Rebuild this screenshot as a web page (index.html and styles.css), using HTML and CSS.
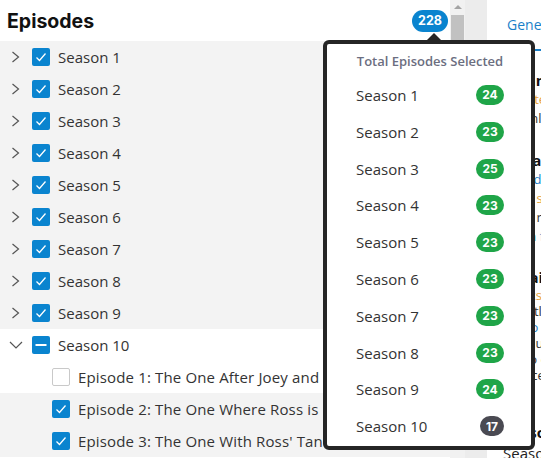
FILE: index.html
```html
<!DOCTYPE html>
<html lang="en">
<head>
<meta charset="utf-8">
<title>Episodes</title>
<link rel="stylesheet" href="styles.css">
</head>
<body>
<div class="app">
  <section class="episodes">
    <header class="ep-header">
      <h1 class="ep-title">Episodes</h1>
      <span class="count">228</span>
    </header>
    <ul class="tree">
      <li class="row"><svg class="chev" viewBox="0 0 16 16"><path d="M4.5 3 L10.5 8 L4.5 13"/></svg><span class="cb cb-on"><svg viewBox="0 0 18 18"><path d="M4.5 9.5 L7.5 12.5 L13.5 5.5"/></svg></span><span class="label">Season 1</span></li>
      <li class="row"><svg class="chev" viewBox="0 0 16 16"><path d="M4.5 3 L10.5 8 L4.5 13"/></svg><span class="cb cb-on"><svg viewBox="0 0 18 18"><path d="M4.5 9.5 L7.5 12.5 L13.5 5.5"/></svg></span><span class="label">Season 2</span></li>
      <li class="row"><svg class="chev" viewBox="0 0 16 16"><path d="M4.5 3 L10.5 8 L4.5 13"/></svg><span class="cb cb-on"><svg viewBox="0 0 18 18"><path d="M4.5 9.5 L7.5 12.5 L13.5 5.5"/></svg></span><span class="label">Season 3</span></li>
      <li class="row"><svg class="chev" viewBox="0 0 16 16"><path d="M4.5 3 L10.5 8 L4.5 13"/></svg><span class="cb cb-on"><svg viewBox="0 0 18 18"><path d="M4.5 9.5 L7.5 12.5 L13.5 5.5"/></svg></span><span class="label">Season 4</span></li>
      <li class="row"><svg class="chev" viewBox="0 0 16 16"><path d="M4.5 3 L10.5 8 L4.5 13"/></svg><span class="cb cb-on"><svg viewBox="0 0 18 18"><path d="M4.5 9.5 L7.5 12.5 L13.5 5.5"/></svg></span><span class="label">Season 5</span></li>
      <li class="row"><svg class="chev" viewBox="0 0 16 16"><path d="M4.5 3 L10.5 8 L4.5 13"/></svg><span class="cb cb-on"><svg viewBox="0 0 18 18"><path d="M4.5 9.5 L7.5 12.5 L13.5 5.5"/></svg></span><span class="label">Season 6</span></li>
      <li class="row"><svg class="chev" viewBox="0 0 16 16"><path d="M4.5 3 L10.5 8 L4.5 13"/></svg><span class="cb cb-on"><svg viewBox="0 0 18 18"><path d="M4.5 9.5 L7.5 12.5 L13.5 5.5"/></svg></span><span class="label">Season 7</span></li>
      <li class="row"><svg class="chev" viewBox="0 0 16 16"><path d="M4.5 3 L10.5 8 L4.5 13"/></svg><span class="cb cb-on"><svg viewBox="0 0 18 18"><path d="M4.5 9.5 L7.5 12.5 L13.5 5.5"/></svg></span><span class="label">Season 8</span></li>
      <li class="row"><svg class="chev" viewBox="0 0 16 16"><path d="M4.5 3 L10.5 8 L4.5 13"/></svg><span class="cb cb-on"><svg viewBox="0 0 18 18"><path d="M4.5 9.5 L7.5 12.5 L13.5 5.5"/></svg></span><span class="label">Season 9</span></li>
      <li class="row row-white"><svg class="chev" viewBox="0 0 16 16"><path d="M2 5 L8 11 L14 5"/></svg><span class="cb cb-on"><svg viewBox="0 0 18 18"><path class="dash" d="M3.5 9 L14.5 9"/></svg></span><span class="label">Season 10</span></li>
      <li class="row row-white row-ep"><span class="cb cb-off"></span><span class="label">Episode 1: The One After Joey and Rachel Kiss</span></li>
      <li class="row row-ep"><span class="cb cb-on"><svg viewBox="0 0 18 18"><path d="M4.5 9.5 L7.5 12.5 L13.5 5.5"/></svg></span><span class="label">Episode 2: The One Where Ross is Fine</span></li>
      <li class="row row-ep"><span class="cb cb-on"><svg viewBox="0 0 18 18"><path d="M4.5 9.5 L7.5 12.5 L13.5 5.5"/></svg></span><span class="label">Episode 3: The One With Ross' Tan</span></li>
    </ul>
  </section>
  <div class="scrollbar"><span class="sb-arrow"></span><span class="sb-thumb"></span></div>
  <div class="gutter"></div>
  <section class="details">
    <nav class="tabs"><span class="tab">General</span></nav>
    <div class="d-block b1">
      <div class="d-title">Summary</div>
      <div class="d-line orange">Selected episodes</div>
      <div class="d-line dark">Downloaded in background</div>
    </div>
    <div class="d-block b2">
      <div class="d-title">Library</div>
      <div class="d-line blue">Friends (1994)</div>
      <div class="d-line orange">Total size</div>
      <div class="d-line dark">Total runtime</div>
      <div class="d-line blue">Open folder</div>
    </div>
    <div class="d-block b3">
      <div class="d-title">Details</div>
      <div class="d-line orange">Tracks</div>
      <div class="d-line dark">Subtitles</div>
      <div class="d-line blue">Audio language</div>
      <div class="d-line dark">Resolution</div>
      <div class="d-line dark">Video codec</div>
      <div class="d-line dark">Source</div>
    </div>
    <div class="d-block b4">
      <div class="d-title">Seasons</div>
      <div class="d-text">Season 10</div>
    </div>
  </section>

  <div class="popover">
    <div class="pop-title">Total Episodes Selected</div>
    <ul class="pop-list">
      <li class="pop-row"><span>Season 1</span><span class="pill green">24</span></li>
      <li class="pop-row"><span>Season 2</span><span class="pill green">23</span></li>
      <li class="pop-row"><span>Season 3</span><span class="pill green">25</span></li>
      <li class="pop-row"><span>Season 4</span><span class="pill green">23</span></li>
      <li class="pop-row"><span>Season 5</span><span class="pill green">23</span></li>
      <li class="pop-row"><span>Season 6</span><span class="pill green">23</span></li>
      <li class="pop-row"><span>Season 7</span><span class="pill green">23</span></li>
      <li class="pop-row"><span>Season 8</span><span class="pill green">23</span></li>
      <li class="pop-row"><span>Season 9</span><span class="pill green">24</span></li>
      <li class="pop-row"><span>Season 10</span><span class="pill gray">17</span></li>
    </ul>
  </div>
</div>
</body>
</html>
```

FILE: styles.css
```css
* { box-sizing: border-box; }
html, body { margin: 0; padding: 0; }
body {
  width: 541px;
  height: 458px;
  overflow: hidden;
  background: #fff;
  font-family: "Open Sans", "Noto Sans", sans-serif;
  color: #333;
}
.app {
  position: relative;
  display: flex;
  height: 458px;
}
.episodes {
  width: 450px;
  flex: none;
  overflow: hidden;
}
.ep-header {
  height: 41px;
  display: flex;
  align-items: center;
  justify-content: space-between;
  padding: 0 2px 0 7px;
}
.ep-title {
  margin: 0;
  font-family: "Inter", sans-serif;
  font-weight: 700;
  font-size: 19.5px;
  color: #111;
}
.count {
  width: 36px;
  height: 22px;
  border-radius: 11px;
  background: #0a84cf;
  color: #fff;
  font-family: "Inter", sans-serif;
  font-weight: 700;
  font-size: 12.5px;
  display: flex;
  align-items: center;
  justify-content: center;
}
.tree {
  list-style: none;
  margin: 0;
  padding: 0;
}
.row {
  height: 32px;
  display: flex;
  align-items: center;
  padding-left: 8px;
  background: #f3f3f3;
  white-space: nowrap;
}
.row-white { background: #fff; }
.row-ep { padding-left: 52px; }
.row-ep .label { letter-spacing: 0.15px; }
.chev {
  width: 16px;
  height: 16px;
  flex: none;
  margin-right: 8px;
  fill: none;
  stroke: #555;
  stroke-width: 1.2;
}
.cb {
  width: 18px;
  height: 18px;
  flex: none;
  border-radius: 2px;
  display: flex;
}
.cb svg {
  width: 18px;
  height: 18px;
  fill: none;
  stroke: #fff;
  stroke-width: 1.3;
}
.cb svg .dash { stroke-width: 2; }
.cb-on { background: #0a84cf; }
.cb-off { background: #fff; border: 1px solid #c9c9c9; }
.label {
  margin-left: 8px;
  font-size: 15px;
  color: #333;
}
.scrollbar {
  width: 15px;
  flex: none;
  background: #f1f1f1;
}
.sb-arrow {
  display: block;
  width: 0;
  height: 0;
  margin: 5px auto 0;
  border-left: 4px solid transparent;
  border-right: 4px solid transparent;
  border-bottom: 4px solid #a3a3a3;
}
.sb-thumb {
  display: block;
  margin: 6px auto 0;
  width: 13px;
  height: 120px;
  background: #c1c1c1;
}
.gutter {
  width: 22px;
  flex: none;
  background: #ececec;
}
.details {
  flex: 1;
  min-width: 0;
  padding-left: 16px;
  white-space: nowrap;
  overflow: hidden;
}
.tabs {
  height: 51px;
  display: flex;
  align-items: stretch;
  border-bottom: 2px solid #1a7fc8;
}
.tab {
  padding: 0 4px;
  display: flex;
  align-items: center;
  color: #1a7fc8;
  font-size: 14px;
}
.d-title {
  font-weight: 700;
  font-size: 15px;
  line-height: 20px;
  color: #111;
}
.d-line {
  font-size: 13px;
  line-height: 19px;
}
.b3 .d-line { line-height: 16px; }
.orange { color: #e8a33a; }
.blue { color: #1a7fc8; }
.dark { color: #333; }
.b1 { margin-top: 19px; }
.b2 { margin-top: 22px; }
.b3 { margin-top: 21px; }
.b4 { margin-top: 39px; }
.d-text { font-size: 15px; line-height: 22px; color: #222; }

.popover {
  position: absolute;
  left: 323px;
  top: 40px;
  width: 212px;
  height: 410px;
  background: #fff;
  border: 4px solid #252525;
  border-radius: 6px;
  padding: 8px 27px 0 29px;
}
.popover::before {
  content: "";
  position: absolute;
  left: 100px;
  top: -11px;
  border-left: 7px solid transparent;
  border-right: 7px solid transparent;
  border-bottom: 7px solid #252525;
}
.pop-title {
  font-size: 13px;
  font-weight: 600;
  line-height: 18px;
  color: #6b6e80;
  text-align: center;
  white-space: nowrap;
}
.pop-list {
  list-style: none;
  margin: 6.6px 0 0;
  padding: 0;
}
.pop-row {
  height: 36.8px;
  display: flex;
  align-items: center;
  justify-content: space-between;
  font-size: 15px;
  color: #333;
}
.pill {
  height: 20px;
  border-radius: 10px;
  color: #fff;
  font-family: "Inter", sans-serif;
  font-weight: 700;
  font-size: 12px;
  display: flex;
  align-items: center;
  justify-content: center;
}
.green { background: #1fa548; width: 28px; }
.gray { background: #4a4a52; width: 24px; }
```
